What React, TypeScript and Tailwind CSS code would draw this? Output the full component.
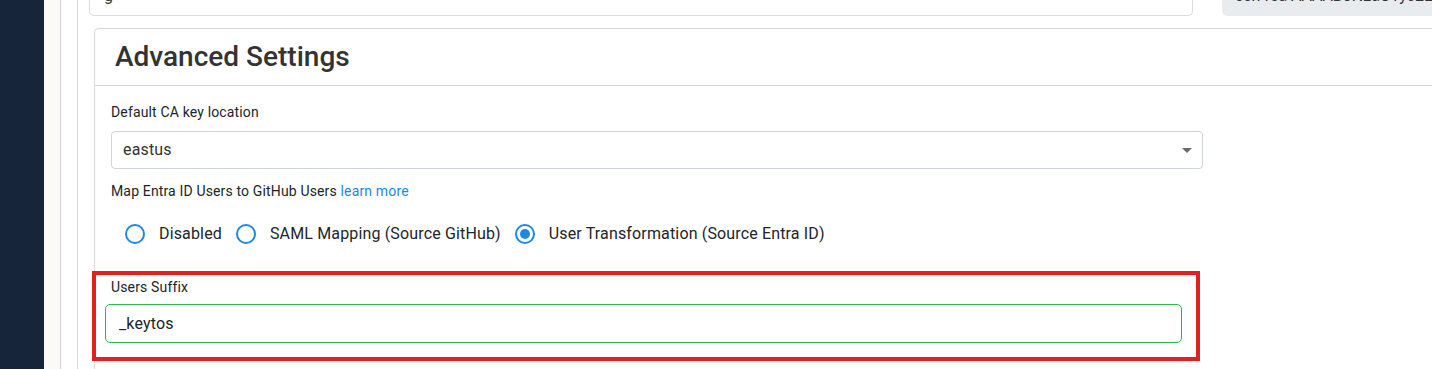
import React from "react";

function Radio({ checked, label }: { checked?: boolean; label: string }) {
  return (
    <div className="flex items-center gap-[14px]">
      <span className="flex h-[20px] w-[20px] items-center justify-center rounded-full border-2 border-[#1e88e5]">
        {checked && <span className="h-[10px] w-[10px] rounded-full bg-[#1e88e5]" />}
      </span>
      <span className="text-[16px] leading-[20px] tracking-[0.15px] text-[#212529]">{label}</span>
    </div>
  );
}

export default function App() {
  return (
    <div
      className="relative flex h-[369px] w-[1432px] overflow-hidden bg-white"
      style={{ fontFamily: "Roboto, 'Liberation Sans', sans-serif" }}
    >
      <div className="w-[44px] shrink-0 bg-[#16253a]" />
      <div className="w-[17px] shrink-0 border-r border-[#d4d4d4] bg-[#fbfaf6]" />
      <div className="flex min-w-0 flex-1 pl-[16px]">
        <div className="flex min-w-0 flex-1 flex-col border-l border-[#d4d4d4] pl-[11px]">
          {/* top row, mostly scrolled out */}
          <div className="flex h-[16px] shrink-0 items-end">
            <div className="flex h-[40px] w-[1104px] shrink-0 items-end rounded-b-[5px] border border-t-0 border-[#dcdcdc] bg-white px-[14px] pb-[9px]">
              <span className="text-[16px] leading-[20px] text-[#333]">g</span>
            </div>
            <div className="ml-[29px] flex h-[40px] flex-1 items-end whitespace-nowrap rounded-bl-[5px] bg-[#e9ecef] pb-[10px] pl-[13px]">
              <span className="text-[16px] leading-[20px] text-[#333]">ssh-rsa AAAAB3NzaC1yc2E</span>
            </div>
          </div>
          {/* Advanced settings card */}
          <div className="ml-[5px] mr-[-20px] mt-[12px] flex h-[380px] shrink-0 flex-col rounded-tl-[5px] border border-r-0 border-[#d8d8d8]">
            <div className="flex h-[57px] shrink-0 items-center border-b border-[#d8d8d8] pl-[20px]">
              <h2 className="text-[28px] font-medium leading-[34px] text-[#333]">Advanced Settings</h2>
            </div>
            <div className="flex flex-col pl-[16px]">
              <div className="mt-[16px] text-[14px] leading-[20px] tracking-[0.15px] text-[#212529]">Default CA key location</div>
              <div className="mt-[9px] flex h-[38px] w-[1092px] items-center justify-between rounded-[4px] border border-[#ced4da] pl-[11px] pr-[10px]">
                <span className="text-[16px] tracking-[0.15px] text-[#333]">eastus</span>
                <svg width="10" height="5" viewBox="0 0 10 5">
                  <path d="M0 0 L10 0 L5 5 Z" fill="#6b6b6b" />
                </svg>
              </div>
              <div className="mt-[12px] text-[14px] leading-[20px] tracking-[0.15px] text-[#212529]">
                Map Entra ID Users to GitHub Users <span className="text-[#1e88e5]">learn more</span>
              </div>
              <div className="ml-[14px] mt-[23px] flex items-center gap-[14px]">
                <Radio label="Disabled" />
                <Radio label="SAML Mapping (Source GitHub)" />
                <Radio checked label="User Transformation (Source Entra ID)" />
              </div>
              <div className="mt-[33px] text-[14px] leading-[20px] tracking-[0.15px] text-[#212529]">Users Suffix</div>
              <div className="ml-[-6px] mt-[7px] flex h-[39px] w-[1077px] items-center rounded-[5px] border border-[#2db84d] pl-[13px]">
                <span className="text-[16px] tracking-[0.15px] text-[#212529]">_keytos</span>
              </div>
            </div>
          </div>
        </div>
      </div>
      {/* red annotation box */}
      <div className="pointer-events-none absolute left-[92px] top-[271px] h-[90px] w-[1108px] border-4 border-[#e3201f]" />
    </div>
  );
}
